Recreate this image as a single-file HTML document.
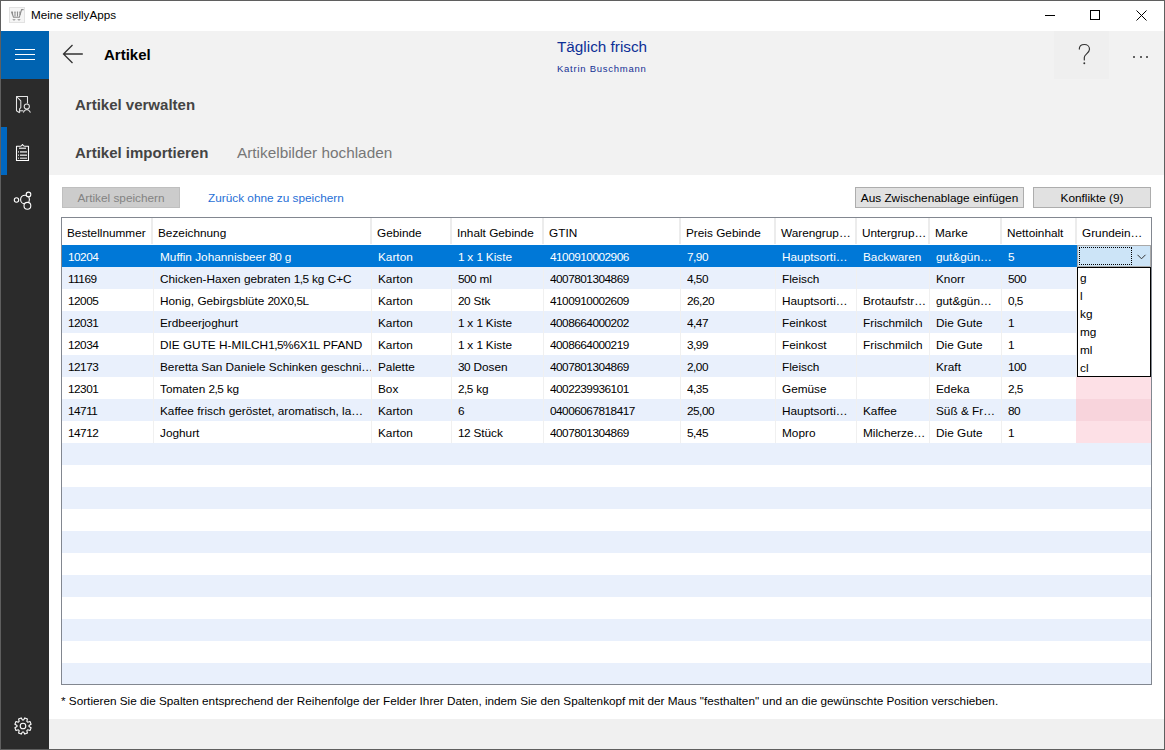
<!DOCTYPE html><html><head><meta charset="utf-8"><style>
*{margin:0;padding:0;box-sizing:border-box}
html,body{width:1165px;height:750px;overflow:hidden;background:#fff;font-family:"Liberation Sans",sans-serif;}
.a{position:absolute}
.t{position:absolute;white-space:pre;font-size:11.8px;line-height:14px;color:#000}
.d{letter-spacing:-0.5px}
</style></head><body><div class="a" style="left:0;top:0;width:1165px;height:750px;background:#fff;border:1px solid #5f5f5f"></div>
<div class="t" style="left:31px;top:8px;font-size:11.7px">Meine sellyApps</div>
<div class="a" style="left:1045px;top:15px;width:10px;height:1px;background:#000"></div>
<div class="a" style="left:1090px;top:10px;width:10px;height:10px;border:1px solid #000"></div>
<svg class="a" style="left:1136px;top:10px" width="11" height="11"><path d="M0.5 0.5L10.5 10.5M10.5 0.5L0.5 10.5" stroke="#000" stroke-width="1"/></svg>
<div class="a" style="left:1px;top:31px;width:48px;height:718px;background:#2b2b2b"></div>
<div class="a" style="left:1px;top:31px;width:48px;height:48px;background:#0063b1"></div>
<div class="a" style="left:15px;top:49px;width:20px;height:1px;background:#fff"></div>
<div class="a" style="left:15px;top:54px;width:20px;height:1px;background:#fff"></div>
<div class="a" style="left:15px;top:59px;width:20px;height:1px;background:#fff"></div>
<div class="a" style="left:1px;top:127px;width:6px;height:48px;background:#0067c0"></div>
<div class="a" style="left:49px;top:31px;width:1115px;height:144px;background:#f2f2f2"></div>
<div class="a" style="left:1054px;top:31px;width:55px;height:48px;background:#efefef"></div>
<svg class="a" style="left:62px;top:44px" width="23" height="20"><path d="M1.5 10H20.8M10.5 1L1.5 10L10.5 19" stroke="#333" stroke-width="1.3" fill="none"/></svg>
<div class="t" style="left:104px;top:46px;font-size:15px;line-height:17px;font-weight:bold">Artikel</div>
<div class="t" style="left:557px;top:38px;font-size:15.3px;line-height:18px;color:#0d2f96">Täglich frisch</div>
<div class="t" style="left:557px;top:63px;font-size:9.5px;line-height:11px;letter-spacing:0.75px;color:#142f94">Katrin Buschmann</div>
<svg class="a" style="left:1072px;top:40px" width="25" height="28"><path d="M7.3 9.1C7.3 6.3 9.5 4.5 12.4 4.5C15.4 4.5 17.5 6.5 17.5 9.2C17.5 11.4 15.9 12.8 14.4 14.1C12.9 15.4 12.3 16.4 12.3 17.6V19.9" stroke="#333" stroke-width="1.15" fill="none" stroke-linecap="round"/><circle cx="12.3" cy="23.3" r="0.95" fill="#333"/></svg>
<div class="a" style="left:1133px;top:56px;width:2px;height:2px;border-radius:1px;background:#333"></div>
<div class="a" style="left:1140px;top:56px;width:2px;height:2px;border-radius:1px;background:#333"></div>
<div class="a" style="left:1146px;top:56px;width:2px;height:2px;border-radius:1px;background:#333"></div>
<div class="t" style="left:75px;top:96px;font-size:15px;line-height:17px;font-weight:bold;color:#444">Artikel verwalten</div>
<div class="t" style="left:75px;top:144px;font-size:15px;line-height:17px;font-weight:bold;color:#444">Artikel importieren</div>
<div class="t" style="left:237px;top:144px;font-size:15.35px;line-height:17px;color:#777">Artikelbilder hochladen</div>
<div class="a" style="left:62px;top:187px;width:118px;height:21px;background:#cccccc;border:1px solid #bfbfbf"></div>
<div class="t" style="left:62px;top:191px;width:118px;text-align:center;color:#838383">Artikel speichern</div>
<div class="t" style="left:208px;top:191px;color:#1f6fd6">Zurück ohne zu speichern</div>
<div class="a" style="left:855px;top:187px;width:169px;height:21px;background:#e1e1e1;border:1px solid #adadad"></div>
<div class="t" style="left:855px;top:191px;width:169px;text-align:center">Aus Zwischenablage einfügen</div>
<div class="a" style="left:1033px;top:187px;width:118px;height:21px;background:#e1e1e1;border:1px solid #adadad"></div>
<div class="t" style="left:1033px;top:191px;width:118px;text-align:center">Konflikte (9)</div>
<div class="a" style="left:61px;top:217px;width:1091px;height:468px;border:1px solid #828790;background:#fff"></div>
<div class="a" style="left:151px;top:218px;width:2px;height:26px;background:#ececec"></div>
<div class="a" style="left:370px;top:218px;width:2px;height:26px;background:#ececec"></div>
<div class="a" style="left:450px;top:218px;width:2px;height:26px;background:#ececec"></div>
<div class="a" style="left:542px;top:218px;width:2px;height:26px;background:#ececec"></div>
<div class="a" style="left:679px;top:218px;width:2px;height:26px;background:#ececec"></div>
<div class="a" style="left:774px;top:218px;width:2px;height:26px;background:#ececec"></div>
<div class="a" style="left:855px;top:218px;width:2px;height:26px;background:#ececec"></div>
<div class="a" style="left:928px;top:218px;width:2px;height:26px;background:#ececec"></div>
<div class="a" style="left:1000px;top:218px;width:2px;height:26px;background:#ececec"></div>
<div class="a" style="left:1075px;top:218px;width:2px;height:26px;background:#ececec"></div>
<div class="t" style="left:67px;top:226px">Bestellnummer</div>
<div class="t" style="left:158px;top:226px">Bezeichnung</div>
<div class="t" style="left:377px;top:226px">Gebinde</div>
<div class="t" style="left:457px;top:226px">Inhalt Gebinde</div>
<div class="t" style="left:549px;top:226px">GTIN</div>
<div class="t" style="left:686px;top:226px">Preis Gebinde</div>
<div class="t" style="left:781px;top:226px">Warengrup…</div>
<div class="t" style="left:862px;top:226px">Untergrup…</div>
<div class="t" style="left:935px;top:226px">Marke</div>
<div class="t" style="left:1007px;top:226px">Nettoinhalt</div>
<div class="t" style="left:1082px;top:226px">Grundein…</div>
<div class="a" style="left:62px;top:245px;width:1014px;height:22px;background:#0078d7"></div>
<div class="a" style="left:153px;top:245px;width:1px;height:22px;background:#0078d7"></div>
<div class="a" style="left:371px;top:245px;width:1px;height:22px;background:#0078d7"></div>
<div class="a" style="left:451px;top:245px;width:1px;height:22px;background:#0078d7"></div>
<div class="a" style="left:543px;top:245px;width:1px;height:22px;background:#0078d7"></div>
<div class="a" style="left:680px;top:245px;width:1px;height:22px;background:#0078d7"></div>
<div class="a" style="left:775px;top:245px;width:1px;height:22px;background:#0078d7"></div>
<div class="a" style="left:856px;top:245px;width:1px;height:22px;background:#0078d7"></div>
<div class="a" style="left:929px;top:245px;width:1px;height:22px;background:#0078d7"></div>
<div class="a" style="left:1001px;top:245px;width:1px;height:22px;background:#0078d7"></div>
<div class="a" style="left:1076px;top:245px;width:1px;height:22px;background:#0078d7"></div>
<div class="t" style="left:68px;top:249.5px;width:84px;overflow:hidden;color:#fff"><span class="d">10204</span></div>
<div class="t" style="left:160px;top:249.5px;width:211px;overflow:hidden;color:#fff">Muffin Johannisbeer <span class="d">80</span> g</div>
<div class="t" style="left:378px;top:249.5px;width:73px;overflow:hidden;color:#fff">Karton</div>
<div class="t" style="left:458px;top:249.5px;width:85px;overflow:hidden;color:#fff"><span class="d">1</span> x <span class="d">1</span> Kiste</div>
<div class="t" style="left:550px;top:249.5px;width:130px;overflow:hidden;color:#fff"><span class="d">4100910002906</span></div>
<div class="t" style="left:687px;top:249.5px;width:88px;overflow:hidden;color:#fff"><span class="d">7,90</span></div>
<div class="t" style="left:782px;top:249.5px;width:74px;overflow:hidden;color:#fff">Hauptsorti…</div>
<div class="t" style="left:863px;top:249.5px;width:66px;overflow:hidden;color:#fff">Backwaren</div>
<div class="t" style="left:936px;top:249.5px;width:65px;overflow:hidden;color:#fff">gut&amp;gün…</div>
<div class="t" style="left:1008px;top:249.5px;width:68px;overflow:hidden;color:#fff"><span class="d">5</span></div>
<div class="a" style="left:62px;top:267px;width:1089px;height:22px;background:#e9f0fc"></div>
<div class="a" style="left:153px;top:267px;width:1px;height:22px;background:#f0f0f0"></div>
<div class="a" style="left:371px;top:267px;width:1px;height:22px;background:#f0f0f0"></div>
<div class="a" style="left:451px;top:267px;width:1px;height:22px;background:#f0f0f0"></div>
<div class="a" style="left:543px;top:267px;width:1px;height:22px;background:#f0f0f0"></div>
<div class="a" style="left:680px;top:267px;width:1px;height:22px;background:#f0f0f0"></div>
<div class="a" style="left:775px;top:267px;width:1px;height:22px;background:#f0f0f0"></div>
<div class="a" style="left:856px;top:267px;width:1px;height:22px;background:#f0f0f0"></div>
<div class="a" style="left:929px;top:267px;width:1px;height:22px;background:#f0f0f0"></div>
<div class="a" style="left:1001px;top:267px;width:1px;height:22px;background:#f0f0f0"></div>
<div class="a" style="left:1076px;top:267px;width:1px;height:22px;background:#f0f0f0"></div>
<div class="t" style="left:68px;top:271.5px;width:84px;overflow:hidden;color:#000"><span class="d">11169</span></div>
<div class="t" style="left:160px;top:271.5px;width:211px;overflow:hidden;color:#000">Chicken-Haxen gebraten <span class="d">1,5</span> kg C+C</div>
<div class="t" style="left:378px;top:271.5px;width:73px;overflow:hidden;color:#000">Karton</div>
<div class="t" style="left:458px;top:271.5px;width:85px;overflow:hidden;color:#000"><span class="d">500</span> ml</div>
<div class="t" style="left:550px;top:271.5px;width:130px;overflow:hidden;color:#000"><span class="d">4007801304869</span></div>
<div class="t" style="left:687px;top:271.5px;width:88px;overflow:hidden;color:#000"><span class="d">4,50</span></div>
<div class="t" style="left:782px;top:271.5px;width:74px;overflow:hidden;color:#000">Fleisch</div>
<div class="t" style="left:863px;top:271.5px;width:66px;overflow:hidden;color:#000"></div>
<div class="t" style="left:936px;top:271.5px;width:65px;overflow:hidden;color:#000">Knorr</div>
<div class="t" style="left:1008px;top:271.5px;width:68px;overflow:hidden;color:#000"><span class="d">500</span></div>
<div class="a" style="left:153px;top:289px;width:1px;height:22px;background:#f0f0f0"></div>
<div class="a" style="left:371px;top:289px;width:1px;height:22px;background:#f0f0f0"></div>
<div class="a" style="left:451px;top:289px;width:1px;height:22px;background:#f0f0f0"></div>
<div class="a" style="left:543px;top:289px;width:1px;height:22px;background:#f0f0f0"></div>
<div class="a" style="left:680px;top:289px;width:1px;height:22px;background:#f0f0f0"></div>
<div class="a" style="left:775px;top:289px;width:1px;height:22px;background:#f0f0f0"></div>
<div class="a" style="left:856px;top:289px;width:1px;height:22px;background:#f0f0f0"></div>
<div class="a" style="left:929px;top:289px;width:1px;height:22px;background:#f0f0f0"></div>
<div class="a" style="left:1001px;top:289px;width:1px;height:22px;background:#f0f0f0"></div>
<div class="a" style="left:1076px;top:289px;width:1px;height:22px;background:#f0f0f0"></div>
<div class="t" style="left:68px;top:293.5px;width:84px;overflow:hidden;color:#000"><span class="d">12005</span></div>
<div class="t" style="left:160px;top:293.5px;width:211px;overflow:hidden;color:#000">Honig, Gebirgsblüte <span class="d">20</span>X<span class="d">0,5</span>L</div>
<div class="t" style="left:378px;top:293.5px;width:73px;overflow:hidden;color:#000">Karton</div>
<div class="t" style="left:458px;top:293.5px;width:85px;overflow:hidden;color:#000"><span class="d">20</span> Stk</div>
<div class="t" style="left:550px;top:293.5px;width:130px;overflow:hidden;color:#000"><span class="d">4100910002609</span></div>
<div class="t" style="left:687px;top:293.5px;width:88px;overflow:hidden;color:#000"><span class="d">26,20</span></div>
<div class="t" style="left:782px;top:293.5px;width:74px;overflow:hidden;color:#000">Hauptsorti…</div>
<div class="t" style="left:863px;top:293.5px;width:66px;overflow:hidden;color:#000">Brotaufstr…</div>
<div class="t" style="left:936px;top:293.5px;width:65px;overflow:hidden;color:#000">gut&amp;gün…</div>
<div class="t" style="left:1008px;top:293.5px;width:68px;overflow:hidden;color:#000"><span class="d">0,5</span></div>
<div class="a" style="left:62px;top:311px;width:1089px;height:22px;background:#e9f0fc"></div>
<div class="a" style="left:153px;top:311px;width:1px;height:22px;background:#f0f0f0"></div>
<div class="a" style="left:371px;top:311px;width:1px;height:22px;background:#f0f0f0"></div>
<div class="a" style="left:451px;top:311px;width:1px;height:22px;background:#f0f0f0"></div>
<div class="a" style="left:543px;top:311px;width:1px;height:22px;background:#f0f0f0"></div>
<div class="a" style="left:680px;top:311px;width:1px;height:22px;background:#f0f0f0"></div>
<div class="a" style="left:775px;top:311px;width:1px;height:22px;background:#f0f0f0"></div>
<div class="a" style="left:856px;top:311px;width:1px;height:22px;background:#f0f0f0"></div>
<div class="a" style="left:929px;top:311px;width:1px;height:22px;background:#f0f0f0"></div>
<div class="a" style="left:1001px;top:311px;width:1px;height:22px;background:#f0f0f0"></div>
<div class="a" style="left:1076px;top:311px;width:1px;height:22px;background:#f0f0f0"></div>
<div class="t" style="left:68px;top:315.5px;width:84px;overflow:hidden;color:#000"><span class="d">12031</span></div>
<div class="t" style="left:160px;top:315.5px;width:211px;overflow:hidden;color:#000">Erdbeerjoghurt</div>
<div class="t" style="left:378px;top:315.5px;width:73px;overflow:hidden;color:#000">Karton</div>
<div class="t" style="left:458px;top:315.5px;width:85px;overflow:hidden;color:#000"><span class="d">1</span> x <span class="d">1</span> Kiste</div>
<div class="t" style="left:550px;top:315.5px;width:130px;overflow:hidden;color:#000"><span class="d">4008664000202</span></div>
<div class="t" style="left:687px;top:315.5px;width:88px;overflow:hidden;color:#000"><span class="d">4,47</span></div>
<div class="t" style="left:782px;top:315.5px;width:74px;overflow:hidden;color:#000">Feinkost</div>
<div class="t" style="left:863px;top:315.5px;width:66px;overflow:hidden;color:#000">Frischmilch</div>
<div class="t" style="left:936px;top:315.5px;width:65px;overflow:hidden;color:#000">Die Gute</div>
<div class="t" style="left:1008px;top:315.5px;width:68px;overflow:hidden;color:#000"><span class="d">1</span></div>
<div class="a" style="left:153px;top:333px;width:1px;height:22px;background:#f0f0f0"></div>
<div class="a" style="left:371px;top:333px;width:1px;height:22px;background:#f0f0f0"></div>
<div class="a" style="left:451px;top:333px;width:1px;height:22px;background:#f0f0f0"></div>
<div class="a" style="left:543px;top:333px;width:1px;height:22px;background:#f0f0f0"></div>
<div class="a" style="left:680px;top:333px;width:1px;height:22px;background:#f0f0f0"></div>
<div class="a" style="left:775px;top:333px;width:1px;height:22px;background:#f0f0f0"></div>
<div class="a" style="left:856px;top:333px;width:1px;height:22px;background:#f0f0f0"></div>
<div class="a" style="left:929px;top:333px;width:1px;height:22px;background:#f0f0f0"></div>
<div class="a" style="left:1001px;top:333px;width:1px;height:22px;background:#f0f0f0"></div>
<div class="a" style="left:1076px;top:333px;width:1px;height:22px;background:#f0f0f0"></div>
<div class="t" style="left:68px;top:337.5px;width:84px;overflow:hidden;color:#000"><span class="d">12034</span></div>
<div class="t" style="left:160px;top:337.5px;width:211px;overflow:hidden;color:#000">DIE GUTE H-MILCH<span class="d">1,5</span>%<span class="d">6</span>X<span class="d">1</span>L PFAND</div>
<div class="t" style="left:378px;top:337.5px;width:73px;overflow:hidden;color:#000">Karton</div>
<div class="t" style="left:458px;top:337.5px;width:85px;overflow:hidden;color:#000"><span class="d">1</span> x <span class="d">1</span> Kiste</div>
<div class="t" style="left:550px;top:337.5px;width:130px;overflow:hidden;color:#000"><span class="d">4008664000219</span></div>
<div class="t" style="left:687px;top:337.5px;width:88px;overflow:hidden;color:#000"><span class="d">3,99</span></div>
<div class="t" style="left:782px;top:337.5px;width:74px;overflow:hidden;color:#000">Feinkost</div>
<div class="t" style="left:863px;top:337.5px;width:66px;overflow:hidden;color:#000">Frischmilch</div>
<div class="t" style="left:936px;top:337.5px;width:65px;overflow:hidden;color:#000">Die Gute</div>
<div class="t" style="left:1008px;top:337.5px;width:68px;overflow:hidden;color:#000"><span class="d">1</span></div>
<div class="a" style="left:62px;top:355px;width:1089px;height:22px;background:#e9f0fc"></div>
<div class="a" style="left:153px;top:355px;width:1px;height:22px;background:#f0f0f0"></div>
<div class="a" style="left:371px;top:355px;width:1px;height:22px;background:#f0f0f0"></div>
<div class="a" style="left:451px;top:355px;width:1px;height:22px;background:#f0f0f0"></div>
<div class="a" style="left:543px;top:355px;width:1px;height:22px;background:#f0f0f0"></div>
<div class="a" style="left:680px;top:355px;width:1px;height:22px;background:#f0f0f0"></div>
<div class="a" style="left:775px;top:355px;width:1px;height:22px;background:#f0f0f0"></div>
<div class="a" style="left:856px;top:355px;width:1px;height:22px;background:#f0f0f0"></div>
<div class="a" style="left:929px;top:355px;width:1px;height:22px;background:#f0f0f0"></div>
<div class="a" style="left:1001px;top:355px;width:1px;height:22px;background:#f0f0f0"></div>
<div class="a" style="left:1076px;top:355px;width:1px;height:22px;background:#f0f0f0"></div>
<div class="t" style="left:68px;top:359.5px;width:84px;overflow:hidden;color:#000"><span class="d">12173</span></div>
<div class="t" style="left:160px;top:359.5px;width:211px;overflow:hidden;color:#000">Beretta San Daniele Schinken geschni…</div>
<div class="t" style="left:378px;top:359.5px;width:73px;overflow:hidden;color:#000">Palette</div>
<div class="t" style="left:458px;top:359.5px;width:85px;overflow:hidden;color:#000"><span class="d">30</span> Dosen</div>
<div class="t" style="left:550px;top:359.5px;width:130px;overflow:hidden;color:#000"><span class="d">4007801304869</span></div>
<div class="t" style="left:687px;top:359.5px;width:88px;overflow:hidden;color:#000"><span class="d">2,00</span></div>
<div class="t" style="left:782px;top:359.5px;width:74px;overflow:hidden;color:#000">Fleisch</div>
<div class="t" style="left:863px;top:359.5px;width:66px;overflow:hidden;color:#000"></div>
<div class="t" style="left:936px;top:359.5px;width:65px;overflow:hidden;color:#000">Kraft</div>
<div class="t" style="left:1008px;top:359.5px;width:68px;overflow:hidden;color:#000"><span class="d">100</span></div>
<div class="a" style="left:153px;top:377px;width:1px;height:22px;background:#f0f0f0"></div>
<div class="a" style="left:371px;top:377px;width:1px;height:22px;background:#f0f0f0"></div>
<div class="a" style="left:451px;top:377px;width:1px;height:22px;background:#f0f0f0"></div>
<div class="a" style="left:543px;top:377px;width:1px;height:22px;background:#f0f0f0"></div>
<div class="a" style="left:680px;top:377px;width:1px;height:22px;background:#f0f0f0"></div>
<div class="a" style="left:775px;top:377px;width:1px;height:22px;background:#f0f0f0"></div>
<div class="a" style="left:856px;top:377px;width:1px;height:22px;background:#f0f0f0"></div>
<div class="a" style="left:929px;top:377px;width:1px;height:22px;background:#f0f0f0"></div>
<div class="a" style="left:1001px;top:377px;width:1px;height:22px;background:#f0f0f0"></div>
<div class="a" style="left:1076px;top:377px;width:1px;height:22px;background:#f0f0f0"></div>
<div class="t" style="left:68px;top:381.5px;width:84px;overflow:hidden;color:#000"><span class="d">12301</span></div>
<div class="t" style="left:160px;top:381.5px;width:211px;overflow:hidden;color:#000">Tomaten <span class="d">2,5</span> kg</div>
<div class="t" style="left:378px;top:381.5px;width:73px;overflow:hidden;color:#000">Box</div>
<div class="t" style="left:458px;top:381.5px;width:85px;overflow:hidden;color:#000"><span class="d">2,5</span> kg</div>
<div class="t" style="left:550px;top:381.5px;width:130px;overflow:hidden;color:#000"><span class="d">4002239936101</span></div>
<div class="t" style="left:687px;top:381.5px;width:88px;overflow:hidden;color:#000"><span class="d">4,35</span></div>
<div class="t" style="left:782px;top:381.5px;width:74px;overflow:hidden;color:#000">Gemüse</div>
<div class="t" style="left:863px;top:381.5px;width:66px;overflow:hidden;color:#000"></div>
<div class="t" style="left:936px;top:381.5px;width:65px;overflow:hidden;color:#000">Edeka</div>
<div class="t" style="left:1008px;top:381.5px;width:68px;overflow:hidden;color:#000"><span class="d">2,5</span></div>
<div class="a" style="left:62px;top:399px;width:1089px;height:22px;background:#e9f0fc"></div>
<div class="a" style="left:153px;top:399px;width:1px;height:22px;background:#f0f0f0"></div>
<div class="a" style="left:371px;top:399px;width:1px;height:22px;background:#f0f0f0"></div>
<div class="a" style="left:451px;top:399px;width:1px;height:22px;background:#f0f0f0"></div>
<div class="a" style="left:543px;top:399px;width:1px;height:22px;background:#f0f0f0"></div>
<div class="a" style="left:680px;top:399px;width:1px;height:22px;background:#f0f0f0"></div>
<div class="a" style="left:775px;top:399px;width:1px;height:22px;background:#f0f0f0"></div>
<div class="a" style="left:856px;top:399px;width:1px;height:22px;background:#f0f0f0"></div>
<div class="a" style="left:929px;top:399px;width:1px;height:22px;background:#f0f0f0"></div>
<div class="a" style="left:1001px;top:399px;width:1px;height:22px;background:#f0f0f0"></div>
<div class="a" style="left:1076px;top:399px;width:1px;height:22px;background:#f0f0f0"></div>
<div class="t" style="left:68px;top:403.5px;width:84px;overflow:hidden;color:#000"><span class="d">14711</span></div>
<div class="t" style="left:160px;top:403.5px;width:211px;overflow:hidden;color:#000">Kaffee frisch geröstet, aromatisch, la…</div>
<div class="t" style="left:378px;top:403.5px;width:73px;overflow:hidden;color:#000">Karton</div>
<div class="t" style="left:458px;top:403.5px;width:85px;overflow:hidden;color:#000"><span class="d">6</span></div>
<div class="t" style="left:550px;top:403.5px;width:130px;overflow:hidden;color:#000"><span class="d">04006067818417</span></div>
<div class="t" style="left:687px;top:403.5px;width:88px;overflow:hidden;color:#000"><span class="d">25,00</span></div>
<div class="t" style="left:782px;top:403.5px;width:74px;overflow:hidden;color:#000">Hauptsorti…</div>
<div class="t" style="left:863px;top:403.5px;width:66px;overflow:hidden;color:#000">Kaffee</div>
<div class="t" style="left:936px;top:403.5px;width:65px;overflow:hidden;color:#000">Süß &amp; Fr…</div>
<div class="t" style="left:1008px;top:403.5px;width:68px;overflow:hidden;color:#000"><span class="d">80</span></div>
<div class="a" style="left:153px;top:421px;width:1px;height:22px;background:#f0f0f0"></div>
<div class="a" style="left:371px;top:421px;width:1px;height:22px;background:#f0f0f0"></div>
<div class="a" style="left:451px;top:421px;width:1px;height:22px;background:#f0f0f0"></div>
<div class="a" style="left:543px;top:421px;width:1px;height:22px;background:#f0f0f0"></div>
<div class="a" style="left:680px;top:421px;width:1px;height:22px;background:#f0f0f0"></div>
<div class="a" style="left:775px;top:421px;width:1px;height:22px;background:#f0f0f0"></div>
<div class="a" style="left:856px;top:421px;width:1px;height:22px;background:#f0f0f0"></div>
<div class="a" style="left:929px;top:421px;width:1px;height:22px;background:#f0f0f0"></div>
<div class="a" style="left:1001px;top:421px;width:1px;height:22px;background:#f0f0f0"></div>
<div class="a" style="left:1076px;top:421px;width:1px;height:22px;background:#f0f0f0"></div>
<div class="t" style="left:68px;top:425.5px;width:84px;overflow:hidden;color:#000"><span class="d">14712</span></div>
<div class="t" style="left:160px;top:425.5px;width:211px;overflow:hidden;color:#000">Joghurt</div>
<div class="t" style="left:378px;top:425.5px;width:73px;overflow:hidden;color:#000">Karton</div>
<div class="t" style="left:458px;top:425.5px;width:85px;overflow:hidden;color:#000"><span class="d">12</span> Stück</div>
<div class="t" style="left:550px;top:425.5px;width:130px;overflow:hidden;color:#000"><span class="d">4007801304869</span></div>
<div class="t" style="left:687px;top:425.5px;width:88px;overflow:hidden;color:#000"><span class="d">5,45</span></div>
<div class="t" style="left:782px;top:425.5px;width:74px;overflow:hidden;color:#000">Mopro</div>
<div class="t" style="left:863px;top:425.5px;width:66px;overflow:hidden;color:#000">Milcherze…</div>
<div class="t" style="left:936px;top:425.5px;width:65px;overflow:hidden;color:#000">Die Gute</div>
<div class="t" style="left:1008px;top:425.5px;width:68px;overflow:hidden;color:#000"><span class="d">1</span></div>
<div class="a" style="left:62px;top:443px;width:1089px;height:22px;background:#e9f0fc"></div>
<div class="a" style="left:62px;top:487px;width:1089px;height:22px;background:#e9f0fc"></div>
<div class="a" style="left:62px;top:531px;width:1089px;height:22px;background:#e9f0fc"></div>
<div class="a" style="left:62px;top:575px;width:1089px;height:22px;background:#e9f0fc"></div>
<div class="a" style="left:62px;top:619px;width:1089px;height:22px;background:#e9f0fc"></div>
<div class="a" style="left:62px;top:663px;width:1089px;height:21px;background:#e9f0fc"></div>
<div class="a" style="left:1076px;top:377px;width:75px;height:22px;background:#fde0e6"></div>
<div class="a" style="left:1076px;top:399px;width:75px;height:22px;background:#f8d4dc"></div>
<div class="a" style="left:1076px;top:421px;width:75px;height:22px;background:#fde0e6"></div>
<div class="a" style="left:1077px;top:245px;width:74px;height:22px;background:#cce4f7;border:1px solid #a9a9a9"></div>
<div class="a" style="left:1079px;top:247px;width:53px;height:18px;border:1px dotted #000"></div>
<svg class="a" style="left:1137px;top:254px" width="10" height="7"><path d="M0.5 0.8L4.5 4.8L8.5 0.8" stroke="#333" stroke-width="1" fill="none"/></svg>
<div class="a" style="left:1077px;top:267px;width:74px;height:110px;background:#fff;border:1px solid #000"></div>
<div class="t" style="left:1080px;top:271px">g</div>
<div class="t" style="left:1080px;top:289px">l</div>
<div class="t" style="left:1080px;top:307px">kg</div>
<div class="t" style="left:1080px;top:325px">mg</div>
<div class="t" style="left:1080px;top:343px">ml</div>
<div class="t" style="left:1080px;top:361px">cl</div>
<div class="t" style="left:61px;top:693.5px;font-size:11.75px">* Sortieren Sie die Spalten entsprechend der Reihenfolge der Felder Ihrer Daten, indem Sie den Spaltenkopf mit der Maus "festhalten" und an die gewünschte Position verschieben.</div>
<div class="a" style="left:49px;top:719px;width:1115px;height:30px;background:#f0f0f0"></div>
<svg class="a" style="left:8px;top:711px" width="30" height="30"><path d="M20.97 15.56 L23.10 16.83 L22.02 19.43 L19.62 18.83 L18.83 19.62 L19.43 22.02 L16.83 23.10 L15.56 20.97 L14.44 20.97 L13.17 23.10 L10.57 22.02 L11.17 19.62 L10.38 18.83 L7.98 19.43 L6.90 16.83 L9.03 15.56 L9.03 14.44 L6.90 13.17 L7.98 10.57 L10.38 11.17 L11.17 10.38 L10.57 7.98 L13.17 6.90 L14.44 9.03 L15.56 9.03 L16.83 6.90 L19.43 7.98 L18.83 10.38 L19.62 11.17 L22.02 10.57 L23.10 13.17 L20.97 14.44 Z" stroke="#fff" stroke-width="1.1" fill="none" stroke-linejoin="round"/><circle cx="15" cy="15" r="2.8" stroke="#fff" stroke-width="1.1" fill="none"/></svg>
<svg class="a" style="left:10px;top:90px" width="30" height="30"><g stroke="#e6e6e6" stroke-width="1.05" fill="none" stroke-linejoin="round"><path d="M17.5 13.5V6.5H6.5V20.8L9.6 22.8"/><path d="M6.5 6.5L10.8 10.8V17.6L9.6 18.8V22.8"/><path d="M9.6 20.8H13.4"/><circle cx="16.8" cy="16.5" r="2.6"/><path d="M13.2 22.5Q14.5 19.8 16.8 19.6Q19.1 19.8 20.5 22.5"/></g></svg>
<svg class="a" style="left:10px;top:138px" width="30" height="30"><g stroke="#fff" stroke-width="1.1" fill="none" stroke-linejoin="round"><path d="M6.5 8.3H10.2Q11.5 8.3 12.5 6.5Q13.5 8.3 14.8 8.3H18.5V22.5H6.5Z"/><path d="M9 10.2H16"/></g><g fill="#ddd"><rect x="8" y="13.2" width="1" height="1.4"/><rect x="10" y="13.2" width="7" height="1.4"/><rect x="8" y="16.5" width="1" height="1.4"/><rect x="10" y="16.5" width="7" height="1.4"/><rect x="8" y="19.6" width="1" height="1.2"/><rect x="10" y="19.6" width="7" height="1.2"/></g></svg>
<svg class="a" style="left:8px;top:185px" width="30" height="30"><g stroke="#fff" stroke-width="1.1" fill="none"><circle cx="8.5" cy="15" r="2.2"/><circle cx="17" cy="14.6" r="4.4"/><circle cx="20.5" cy="9.4" r="2.3" fill="#2b2b2b"/><circle cx="19.4" cy="20.8" r="3.4" fill="#2b2b2b"/></g></svg>
<svg class="a" style="left:9px;top:7px" width="17" height="16"><rect x="0.5" y="0.5" width="15" height="15" fill="#f5f5f5" stroke="#e2e2e2"/><g stroke="#8c8c8c" stroke-width="1.1" fill="none"><path d="M2.5 4.8L4.5 10.3H10.3L12.6 2.6H14.6"/><path d="M3.5 5V8M6 5V9.5M8.5 5V9.5M11 5V8"/><path d="M2.5 5H3.8M5.4 5H6.6M7.9 5H9.1M10.4 5H11.6"/></g><g fill="#8c8c8c"><path d="M3.2 12.2H6.8L5 13.8Z"/><path d="M8.2 12.2H11.8L10 13.8Z"/></g></svg></body></html>
